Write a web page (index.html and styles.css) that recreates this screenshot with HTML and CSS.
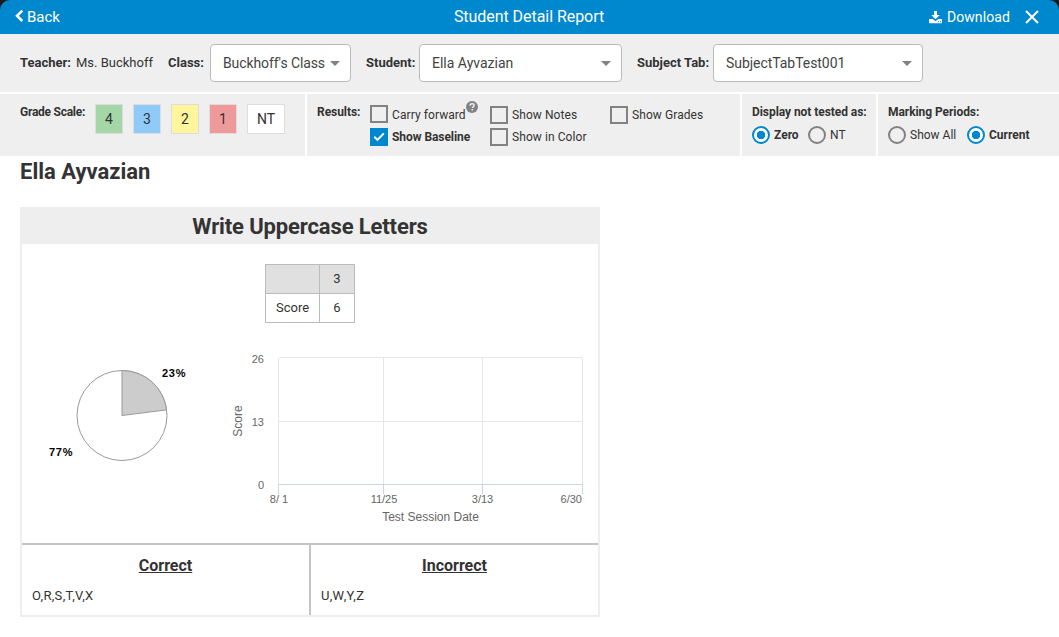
FILE: index.html
```html
<!DOCTYPE html>
<html lang="en">
<head>
<meta charset="utf-8">
<title>Student Detail Report</title>
<link rel="stylesheet" href="styles.css">
</head>
<body>
<div class="topwrap">
  <header class="topbar">
    <a class="back"><svg width="9" height="14" viewBox="0 0 9 14"><path d="M7.3 1.6 2 6.8l5.3 5.2" fill="none" stroke="#fff" stroke-width="2.5"/></svg><span>Back</span></a>
    <h1 class="title">Student Detail Report</h1>
    <div class="actions">
      <a class="download"><svg width="13" height="13" viewBox="0 0 13 13" fill="#fff"><path d="M5 0h3v4h2.800L6.500 8.300 2.200 4H5z"/><path d="M.6 8h3.100l2.800 2.300L9.300 8h3.100q.6 0 .6.600v3q0 .6-.6.600H.6q-.6 0-.6-.6v-3Q0 8 .6 8z"/><path d="M9 10.200h1v1H9zM11 10.200h1v1h-1z" fill="#0088ce"/></svg><span>Download</span></a>
      <a class="close"><svg width="14" height="14" viewBox="0 0 14 14"><path d="M1 1l12 12M13 1 1 13" stroke="#fff" stroke-width="2"/></svg></a>
    </div>
  </header>
</div>
<section class="filters">
  <b class="label">Teacher:</b><span class="teacher">Ms. Buckhoff</span>
  <b class="label label-class">Class:</b><div class="select select-class"><span>Buckhoff's Class</span><i class="arrow"></i></div>
  <b class="label label-student">Student:</b><div class="select select-student"><span>Ella Ayvazian</span><i class="arrow"></i></div>
  <b class="label label-tab">Subject Tab:</b><div class="select select-tab"><span>SubjectTabTest001</span><i class="arrow"></i></div>
</section>
<section class="options">
  <div class="panel panel-scale">
    <b class="heading">Grade Scale:</b>
    <div class="scale"><span class="g4">4</span><span class="g3">3</span><span class="g2">2</span><span class="g1">1</span><span class="nt">NT</span></div>
  </div>
  <div class="panel panel-results">
    <b class="heading">Results:</b>
    <div class="checks">
      <label class="check raised"><i class="box"></i><span>Carry forward</span><svg class="help" width="12" height="12" viewBox="0 0 12 12"><circle cx="6" cy="6" r="6" fill="#828282"/><path d="M4.100 4.700C4.100 3.300 5 2.700 6.100 2.700c1.200 0 2 .7 2 1.700 0 1.400-1.800 1.400-1.800 2.700" fill="none" stroke="#efefef" stroke-width="1.500"/><path d="M5.500 8h1.600v1.500H5.500z" fill="#efefef"/></svg></label>
      <label class="check"><i class="box"></i><span>Show Notes</span></label>
      <label class="check"><i class="box"></i><span>Show Grades</span></label>
      <label class="check"><i class="box on"><svg width="18" height="18" viewBox="0 0 18 18"><path d="M4.300 8.700l3.200 3.200 6.300-6.500" fill="none" stroke="#fff" stroke-width="2"/></svg></i><b>Show Baseline</b></label>
      <label class="check"><i class="box"></i><span>Show in Color</span></label>
    </div>
  </div>
  <div class="panel panel-display">
    <b class="heading">Display not tested as:</b>
    <div class="radios"><label><i class="radio on"></i><b>Zero</b></label><label><i class="radio"></i><span>NT</span></label></div>
  </div>
  <div class="panel panel-periods">
    <b class="heading">Marking Periods:</b>
    <div class="radios"><label><i class="radio"></i><span>Show All</span></label><label><i class="radio on"></i><b>Current</b></label></div>
  </div>
</section>
<main class="report">
  <h2 class="student">Ella Ayvazian</h2>
  <article class="card">
    <h2 class="card-title">Write Uppercase Letters</h2>
    <table class="scores"><tr class="head"><td></td><td>3</td></tr><tr><td>Score</td><td>6</td></tr></table>
    <svg class="charts" width="576" height="220" viewBox="22 323 576 220">
      <g stroke="#999" stroke-width="1">
        <circle cx="122" cy="415.500" r="45" fill="#fff"/>
        <path d="M122 415.500V370.500A45 45 0 0 1 166.650 409.860Z" fill="#ccc" stroke-linejoin="round"/>
      </g>
      <g class="pie-label"><text x="162" y="377">23%</text><text x="49" y="456">77%</text></g>
      <path d="M278.500 358V484M383.500 358V484M482.500 358V484M582.500 358V484M279 357.500H582M279 421.500H582" stroke="#e6e6e6" fill="none"/>
      <path d="M278 484.500H583M278.500 484V494M383.500 484V494M482.500 484V494M582.500 484V494" stroke="#ccd6eb" fill="none"/>
      <g class="axis" text-anchor="end"><text x="264" y="363">26</text><text x="264" y="426">13</text><text x="264" y="489">0</text><text x="582" y="503">6/30</text></g>
      <g class="axis" text-anchor="middle"><text x="279" y="503">8/ 1</text><text x="384" y="503">11/25</text><text x="482.500" y="503">3/13</text></g>
      <g class="axis-title" text-anchor="middle"><text x="430.500" y="521">Test Session Date</text><text transform="translate(242 421) rotate(-90)">Score</text></g>
    </svg>
    <div class="answers">
      <div class="answer correct"><h3>Correct</h3><p>O,R,S,T,V,X</p></div>
      <div class="answer"><h3>Incorrect</h3><p>U,W,Y,Z</p></div>
    </div>
  </article>
</main>
</body>
</html>
```
FILE: styles.css
```css
* { box-sizing: border-box; }
body { margin: 0; background: #fff; color: #333; font-family: Roboto, sans-serif; font-size: 13px; height: 637px; overflow: hidden; }
h1, h2, h3, p { margin: 0; }
svg { display: block; flex: none; }
.topwrap { background: #1b1b1b; height: 34px; }
.topbar { display: grid; grid-template-columns: 1fr auto 1fr; align-items: center; height: 34px; padding: 0 20px 0 15px; background: #0088ce; color: #fff; border-radius: 10px 10px 0 0; }
.back, .download, .actions { display: flex; align-items: center; }
.back { gap: 3px; font-size: 15px; }
.back svg { margin-bottom: 3px; }
.title { padding-left: 4px; font-size: 16px; font-weight: 400; line-height: 34px; letter-spacing: -.05px; }
.actions { justify-content: flex-end; }
.download { gap: 5px; font-size: 14px; letter-spacing: .1px; }
.close { margin-left: 15px; }
.filters { display: flex; align-items: center; height: 58px; padding: 0 20px; background: #efefef; white-space: nowrap; }
.label { line-height: 18px; }
.label:first-child { width: 50px; }
.teacher { width: 86px; margin-left: 6px; margin-right: 6px; line-height: 18px; }
.label-class { width: 42px; }
.label-student { width: 53px; margin-left: 15px; }
.label-tab { width: 76px; margin-left: 15px; }
.select { display: flex; justify-content: space-between; align-items: center; height: 38px; padding: 0 10px 0 12px; border: 1px solid #bbb; border-radius: 4px; background: #fff; font-size: 14px; color: #444; }
.select-class { width: 141px; letter-spacing: -.1px; }
.select-student { width: 203px; }
.select-tab { width: 210px; letter-spacing: -.05px; }
.arrow { border: 5px solid transparent; border-top-color: #828282; border-bottom: 0; }
.options { display: flex; gap: 2px; margin-top: 2px; height: 62px; white-space: nowrap; font-size: 12px; }
.panel { background: #efefef; padding: 10px 10px 0; }
.heading { line-height: 16px; letter-spacing: -.06px; }
.panel-scale { display: flex; width: 305px; padding-left: 20px; }
.panel-scale .heading { width: 65px; letter-spacing: -.25px; }
.scale { display: flex; gap: 10px; margin-left: 10px; }
.scale span { width: 28px; height: 30px; border: 1px solid #ddd; font-size: 14px; line-height: 29px; text-align: center; }
.scale .nt { width: 38px; background: #fff; }
.g4 { background: #a5d6a7; }
.g3 { background: #90caf9; }
.g2 { background: #fff59d; }
.g1 { background: #ef9a9a; }
.panel-results { display: flex; width: 433px; }
.panel-results .heading { width: 43px; }
.checks { display: grid; grid-template-columns: 120px 120px 120px; grid-template-rows: 22px 22px; margin-left: 10px; }
.check { display: flex; align-items: center; height: 22px; gap: 4px; }
.check b { letter-spacing: -.06px; }
.check span { letter-spacing: .08px; }
.box { flex: none; width: 18px; height: 18px; border: 2px solid #828282; }
.box.on { border: 0; background: #0088ce; }
.raised .box { margin-bottom: 2px; }
.help { margin: -16px 0 0 -4px; }
.panel-display { width: 134px; }
.panel-periods { width: 181px; }
.radios { display: flex; gap: 10px; margin-top: 6px; }
.radios label { display: flex; align-items: center; gap: 4px; line-height: 18px; }
.radios span, .radios b { padding-top: 1px; line-height: 17px; }
.panel-display label:first-child { width: 46px; }
.panel-periods label:first-child { width: 69px; }
.radio { flex: none; width: 18px; height: 18px; border: 2px solid #828282; border-radius: 50%; }
.radio.on { border-color: #0088ce; background: radial-gradient(circle, #0088ce 0 4px, #fff 4.500px); }
.report { padding: 0 20px; }
.student { height: 51px; padding-top: 1px; font-size: 22px; line-height: 30px; }
.card { width: 580px; height: 410px; border: 2px solid #eee; }
.card-title { height: 35px; background: #eee; text-align: center; font-size: 22px; line-height: 35px; letter-spacing: -.13px; }
.scores { width: 90px; margin: 20px auto 0; border-collapse: collapse; table-layout: fixed; }
.scores td { width: 35px; height: 29px; padding: 0 0 2px; border: 1px solid #bbb; text-align: center; }
.scores td:first-child { width: 54px; }
.scores .head { background: #e0e0e0; }
.pie-label, .axis, .axis-title { font-family: "Liberation Sans", Arial, sans-serif; font-size: 11px; }
.pie-label { font-weight: 700; fill: #000; letter-spacing: .7px; }
.axis { fill: #666; }
.axis-title { font-size: 12px; fill: #666; }
.answers { display: flex; height: 72px; border-top: 2px solid #c4c4c4; }
.answer { flex: 1; padding: 10px 10px 0; }
.correct { flex: 0 0 289px; border-right: 2px solid #c4c4c4; }
.answer h3 { font-size: 16px; line-height: 22px; text-align: center; text-decoration: underline; text-decoration-thickness: 1px; }
.answer p { margin-top: 9px; line-height: 20px; letter-spacing: .3px; }
```
